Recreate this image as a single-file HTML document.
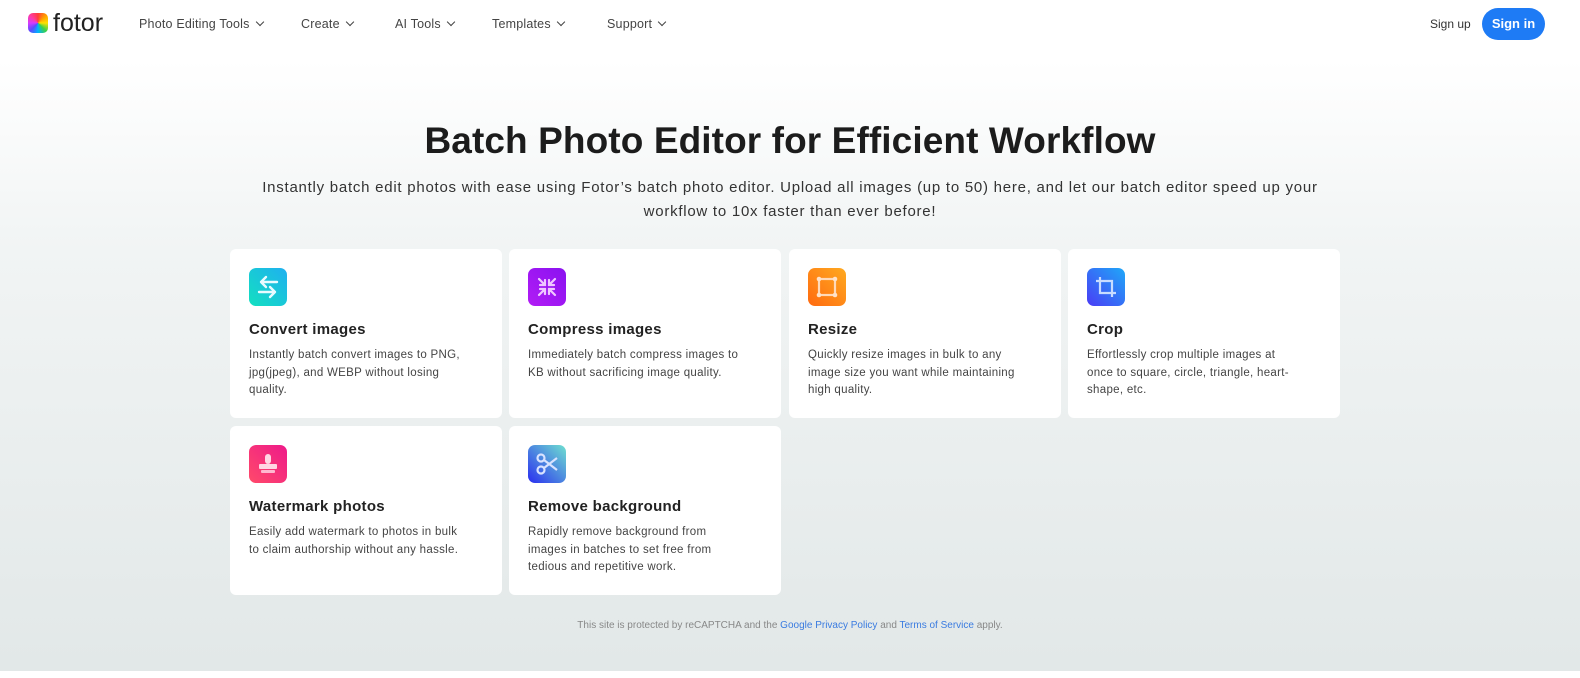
<!DOCTYPE html>
<html><head><meta charset="utf-8"><style>
*{margin:0;padding:0;box-sizing:border-box}
body{width:1580px;height:678px;overflow:hidden;font-family:"Liberation Sans",sans-serif;background:linear-gradient(#fff 0,#fff 60px,#f1f4f4 250px,#e2e8e8 670px);position:relative;color:#222}
.hdr{position:absolute;top:0;left:0;right:0;height:48px;background:#fff}
.logo{position:absolute;left:28px;top:13px;width:20px;height:20px;border-radius:5px;background:conic-gradient(#ff3b3b,#ff9d00,#ffe100,#3ad14a,#00b3ff,#5a4bff,#d63bff,#ff3b9d,#ff3b3b)}
.lt{position:absolute;left:53px;top:9px;font-size:25px;color:#222}
.nav{position:absolute;top:17px;font-size:12.5px;color:#444;letter-spacing:.2px}
.nav:after{content:"";display:inline-block;width:5px;height:5px;border-right:1.5px solid #444;border-bottom:1.5px solid #444;transform:rotate(45deg);margin-left:7px;position:relative;top:-3px}
.su{position:absolute;left:1430px;top:17px;font-size:12px;color:#333}
.si{position:absolute;left:1482px;top:8px;width:63px;height:32px;border-radius:16px;background:#1e7bf5;color:#fff;font-size:13px;font-weight:bold;text-align:center;line-height:32px}
h1{position:absolute;top:120px;left:0;right:0;text-align:center;font-size:37px;font-weight:bold;color:#1c1c1c;letter-spacing:.1px}
.sub{position:absolute;top:176px;left:0;right:0;text-align:center;font-size:15px;line-height:24px;color:#333;letter-spacing:.75px;white-space:nowrap}
.card{position:absolute;width:272px;height:169px;background:#fff;border-radius:6px}
.ic{position:absolute;left:19px;top:19px;width:38px;height:38px;border-radius:7px}
.ic svg{width:38px;height:38px}
.t{position:absolute;left:19px;top:72px;font-size:15px;font-weight:bold;color:#222;letter-spacing:.3px}
.d{position:absolute;left:19px;top:98px;font-size:11.5px;line-height:17.5px;color:#444;white-space:nowrap;letter-spacing:.3px}
.foot{position:absolute;top:620px;left:0;right:0;text-align:center;font-size:10px;color:#888}
.foot a{color:#3a7be0;text-decoration:none}
</style></head><body>
<div class="hdr">
<div class="logo"></div><div class="lt">fotor</div>
<div class="nav" style="left:139px">Photo Editing Tools</div>
<div class="nav" style="left:301px">Create</div>
<div class="nav" style="left:395px">AI Tools</div>
<div class="nav" style="left:492px">Templates</div>
<div class="nav" style="left:607px">Support</div>
<div class="su">Sign up</div><div class="si">Sign in</div>
</div>
<h1>Batch Photo Editor for Efficient Workflow</h1>
<div class="sub">Instantly batch edit photos with ease using Fotor’s batch photo editor. Upload all images (up to 50) here, and let our batch editor speed up your<br>workflow to 10x faster than ever before!</div>

<div class="card" style="left:230px;top:249px"><div class="ic" style="background:linear-gradient(45deg,#13e0c0,#1fb0f0)"><svg viewBox="0 0 38 38" fill="none" stroke="#e8fbff" stroke-width="2.4" stroke-linecap="round" stroke-linejoin="round"><path d="M12 14h16M17 9l-5 5 5 5M10 24h16M21 19l5 5-5 5"/></svg></div><div class="t">Convert images</div><div class="d">Instantly batch convert images to PNG,<br>jpg(jpeg), and WEBP without losing<br>quality.</div></div>
<div class="card" style="left:509px;top:249px"><div class="ic" style="background:linear-gradient(45deg,#b21cf5,#8a12f0)"><svg viewBox="0 0 38 38" fill="none" stroke="#f0c8ff" stroke-width="2.2" stroke-linecap="round"><path d="M11 11l6 6M17 12v5h-5M27 11l-6 6M21 12v5h5M11 27l6-6M17 26v-5h-5M27 27l-6-6M21 26v-5h5"/></svg></div><div class="t">Compress images</div><div class="d">Immediately batch compress images to<br>KB without sacrificing image quality.</div></div>
<div class="card" style="left:789px;top:249px"><div class="ic" style="background:linear-gradient(45deg,#ff6a10,#ffaa20)"><svg viewBox="0 0 38 38" fill="none" stroke="#ffd9b8" stroke-width="2.2"><rect x="11" y="11" width="16" height="16"/><g fill="#ffe2c8" stroke="none"><circle cx="11" cy="11" r="2.3"/><circle cx="27" cy="11" r="2.3"/><circle cx="11" cy="27" r="2.3"/><circle cx="27" cy="27" r="2.3"/></g></svg></div><div class="t">Resize</div><div class="d">Quickly resize images in bulk to any<br>image size you want while maintaining<br>high quality.</div></div>
<div class="card" style="left:1068px;top:249px"><div class="ic" style="background:linear-gradient(45deg,#4a3cf5,#1fa8f8)"><svg viewBox="0 0 38 38" fill="none" stroke="#c8dcff" stroke-width="2.2"><path d="M13 9v16h16M9 13h16v16"/></svg></div><div class="t">Crop</div><div class="d">Effortlessly crop multiple images at<br>once to square, circle, triangle, heart-<br>shape, etc.</div></div>
<div class="card" style="left:230px;top:426px"><div class="ic" style="background:linear-gradient(45deg,#ff4a6a,#ee1a8a)"><svg viewBox="0 0 38 38" fill="#ffd6e4"><rect x="16" y="9" width="6" height="10" rx="3"/><rect x="10" y="19" width="18" height="5" rx="1"/><rect x="12" y="25" width="14" height="3" rx="1" fill="#ffb8cf"/></svg></div><div class="t">Watermark photos</div><div class="d">Easily add watermark to photos in bulk<br>to claim authorship without any hassle.</div></div>
<div class="card" style="left:509px;top:426px"><div class="ic" style="background:linear-gradient(45deg,#2a2ef0,#6fe0d0)"><svg viewBox="0 0 38 38" fill="none" stroke="#d8e2ff" stroke-width="2.2"><circle cx="13" cy="13" r="3.5"/><circle cx="13" cy="25" r="3.5"/><path d="M16 15l13 10M16 23l13-10"/></svg></div><div class="t">Remove background</div><div class="d">Rapidly remove background from<br>images in batches to set free from<br>tedious and repetitive work.</div></div>
<div class="foot">This site is protected by reCAPTCHA and the <a>Google Privacy Policy</a> and <a>Terms of Service</a> apply.</div>
<div style="position:absolute;left:0;right:0;top:671px;height:7px;background:#fff"></div>
</body></html>
